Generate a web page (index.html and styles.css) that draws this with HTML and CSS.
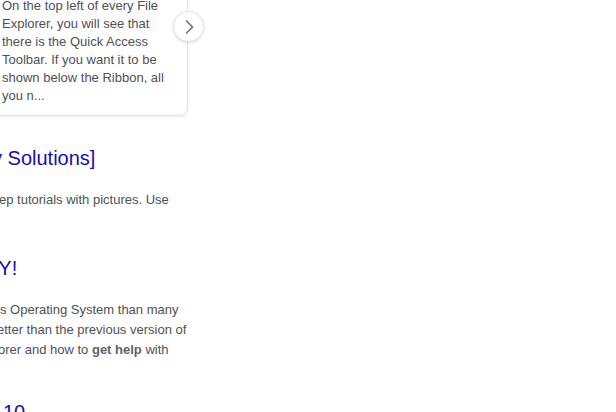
FILE: index.html
```html
<!DOCTYPE html>
<html lang="en">
<head>
<meta charset="utf-8">
<title>Results</title>
<link rel="stylesheet" href="styles.css">
</head>
<body>
<main class="page">
  <div class="carousel">
    <div class="card">
      <p class="card-text">On the top left of every File Explorer, you will see that there is the Quick Access Toolbar. If you want it to be shown below the Ribbon, all you n...</p>
    </div>
    <button class="next" aria-label="Next">
      <svg width="14" height="16" viewBox="0 0 14 16"><path d="M4 1.5 L10.5 8 L4 14.5" fill="none" stroke="#70757a" stroke-width="1.6"/></svg>
    </button>
  </div>

  <section class="result r1">
    <h3 class="title t1">y Solutions]</h3>
    <p class="snippet s1">ep tutorials with pictures. Use</p>
  </section>

  <section class="result r2">
    <h3 class="title t2">SY!</h3>
    <p class="snippet s2"><span class="ln l1">s Operating System than many</span><span class="ln l2">etter than the previous version of</span><span class="ln l3">orer and how to <b>get help</b> with</span></p>
  </section>

  <section class="result r3">
    <h3 class="title t3">10</h3>
  </section>
</main>
</body>
</html>
```

FILE: styles.css
```css
html, body {
  margin: 0;
  padding: 0;
  background: #fff;
  overflow: hidden;
}
body {
  width: 616px;
  height: 412px;
  font-family: "Liberation Sans", Arial, sans-serif;
}
.page {
  display: flex;
  flex-direction: column;
}
.carousel {
  position: relative;
  width: 208px;
  margin-left: -21px;
  margin-top: -15px;
}
.card {
  box-sizing: border-box;
  width: 209px;
  border: 1px solid #e2e3e5;
  border-radius: 8px;
  box-shadow: 0 1px 2px rgba(0,0,0,0.08);
  padding: 11px 12px 10px 22px;
  background: #fff;
}
.card-text {
  margin: 0;
  font-size: 13px;
  line-height: 18px;
  color: #4d5156;
}
.next {
  position: absolute;
  top: 26px;
  right: -17px;
  width: 31px;
  height: 31px;
  border-radius: 50%;
  border: 1px solid #e6e6e6;
  background: #fff;
  box-shadow: 0 1px 3px rgba(0,0,0,0.14);
  padding: 0;
  display: flex;
  align-items: center;
  justify-content: center;
}
.next svg { display: block; }
.title {
  margin: 0;
  font-weight: normal;
  font-size: 20px;
  line-height: 22px;
  color: #1a0dab;
  white-space: nowrap;
}
.snippet {
  margin: 0;
  font-size: 13px;
  line-height: 20px;
  color: #4d5156;
  white-space: nowrap;
}
.snippet b { font-weight: bold; color: #5f6368; }
.ln { display: block; }
.r1 { margin-top: 31px; }
.t1 { margin-left: -8px; margin-bottom: 21px; }
.s1 { margin-left: -1px; }
.r2 { margin-top: 47px; }
.t2 { margin-left: -15px; margin-bottom: 21px; }
.l1 { margin-left: 0; }
.l2 { margin-left: -3px; }
.l3 { margin-left: -2px; }
.r3 { margin-top: 41px; }
.t3 { margin-left: 3px; }
```
